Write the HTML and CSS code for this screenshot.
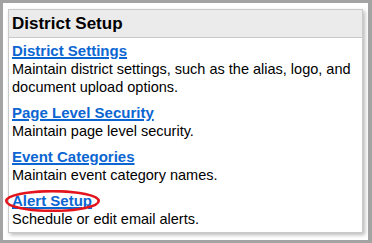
FILE: index.html
```html
<!DOCTYPE html>
<html>
<head>
<meta charset="utf-8">
<link rel="stylesheet" href="styles.css">
</head>
<body>
<div class="frame">
  <div class="panel">
    <div class="panel-header">District Setup</div>
    <div class="panel-body">
      <div class="item">
        <div class="item-link"><a href="#">District Settings</a></div>
        <div class="item-desc">Maintain district settings, such as the alias, logo, and document upload options.</div>
      </div>
      <div class="item">
        <div class="item-link"><a href="#">Page Level Security</a></div>
        <div class="item-desc">Maintain page level security.</div>
      </div>
      <div class="item">
        <div class="item-link"><a href="#">Event Categories</a></div>
        <div class="item-desc">Maintain event category names.</div>
      </div>
      <div class="item">
        <div class="item-link"><a href="#" class="circled">Alert Setup<svg class="ring" viewBox="0 0 95 22" width="95" height="22"><ellipse cx="47.5" cy="11" rx="46.2" ry="9.8" fill="none" stroke="#e3141b" stroke-width="2.6"/></svg></a></div>
        <div class="item-desc">Schedule or edit email alerts.</div>
      </div>
    </div>
  </div>
</div>
</body>
</html>
```

FILE: styles.css
```css
html, body {
  margin: 0;
  padding: 0;
}
body {
  width: 372px;
  height: 243px;
  background: #a3a3a3;
  overflow: hidden;
  font-family: Arial, "Liberation Sans", sans-serif;
}
.frame {
  box-sizing: border-box;
  margin: 3px 4px 3px 3px;
  width: 365px;
  height: 237px;
  background: #ffffff;
  padding: 6px 0 0 5px;
}
.panel {
  box-sizing: border-box;
  width: 355px;
  height: 224px;
  border: 1px solid #c9c9c9;
  background: #ffffff;
  box-shadow: 2px 2px 4px rgba(0, 0, 0, 0.28);
}
.panel-header {
  height: 27px;
  line-height: 27px;
  background: #ebebeb;
  border-bottom: 1px solid #c9c9c9;
  padding-left: 3px;
  font-size: 17px;
  font-weight: bold;
  color: #000;
}
.panel-body {
  padding: 3px 3px 0 3px;
}
.item {
  margin-bottom: 7px;
}
.item-link {
  line-height: 19px;
  font-size: 15px;
  font-weight: bold;
}
.item-link a {
  color: #0b66d2;
  text-decoration: underline;
  text-decoration-thickness: 2px;
  text-underline-offset: 1px;
}
.item-desc {
  font-size: 14.5px;
  line-height: 18px;
  color: #000;
}
.circled {
  position: relative;
  display: inline-block;
}
.ring {
  position: absolute;
  left: -7px;
  top: -1px;
}
```
